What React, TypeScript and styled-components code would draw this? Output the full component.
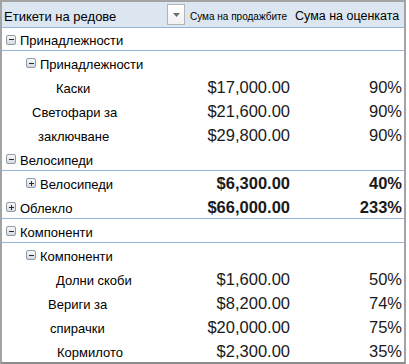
import React from "react";
import styled, { createGlobalStyle } from "styled-components";

type Row = {
  label: string;
  indent: number;
  toggle?: "minus" | "plus";
  sales?: string;
  pct?: string;
  bold?: boolean;
  line?: boolean;
  height?: number;
};

const rows: Row[] = [
  { label: "Принадлежности", indent: 6, toggle: "minus", line: true, height: 23 },
  { label: "Принадлежности", indent: 26, toggle: "minus" },
  { label: "Каски", indent: 56, sales: "$17,000.00", pct: "90%" },
  { label: "Светофари за", indent: 32, sales: "$21,600.00", pct: "90%" },
  { label: "заключване", indent: 38, sales: "$29,800.00", pct: "90%" },
  { label: "Велосипеди", indent: 6, toggle: "minus", line: true },
  { label: "Велосипеди", indent: 26, toggle: "plus", sales: "$6,300.00", pct: "40%", bold: true },
  { label: "Облекло", indent: 6, toggle: "plus", sales: "$66,000.00", pct: "233%", bold: true, line: true },
  { label: "Компоненти", indent: 6, toggle: "minus", line: true },
  { label: "Компоненти", indent: 26, toggle: "minus" },
  { label: "Долни скоби", indent: 56, sales: "$1,600.00", pct: "50%" },
  { label: "Вериги за", indent: 48, sales: "$8,200.00", pct: "74%" },
  { label: "спирачки", indent: 50, sales: "$20,000.00", pct: "75%" },
  { label: "Кормилото", indent: 57, sales: "$2,300.00", pct: "35%" },
];

const Toggle: React.FC<{ kind: "minus" | "plus" }> = ({ kind }) => (
  <ToggleBox>
    <svg width="7" height="7" viewBox="0 0 7 7">
      <rect x="1" y="3" width="5" height="1" fill="#2b2b2b" />
      {kind === "plus" && <rect x="3" y="1" width="1" height="5" fill="#2b2b2b" />}
    </svg>
  </ToggleBox>
);

const App: React.FC = () => {
  return (
    <>
      <GlobalStyle />
      <Pivot>
        <HeaderRow>
          <HeaderLabel>
            <span>Етикети на редове</span>
            <FilterButton>
              <svg width="7" height="4" viewBox="0 0 7 4">
                <path d="M0 0h7L3.5 4z" fill="#6d6d6d" />
              </svg>
            </FilterButton>
          </HeaderLabel>
          <SalesHead>Сума на продажбите</SalesHead>
          <PctHead>Сума на оценката</PctHead>
        </HeaderRow>
        {rows.map((r, i) => (
          <DataRow key={i} $line={r.line} $height={r.height ?? 24}>
            <Label $indent={r.indent}>
              {r.toggle && <Toggle kind={r.toggle} />}
              <span>{r.label}</span>
            </Label>
            <Value $bold={r.bold}>{r.sales}</Value>
            <Value $bold={r.bold}>{r.pct}</Value>
          </DataRow>
        ))}
      </Pivot>
    </>
  );
};

export default App;

const GlobalStyle = createGlobalStyle`
  body {
    margin: 0;
    background: #ffffff;
  }
`;

const Pivot = styled.div`
  box-sizing: border-box;
  width: 406px;
  height: 364px;
  border-top: 2px solid #a3a3a3;
  border-left: 2px solid #a3a3a3;
  border-right: 2px solid #a3a3a3;
  border-bottom: 2px solid #8c8c8c;
  background: #ffffff;
  overflow: hidden;
`;

const HeaderRow = styled.div`
  display: grid;
  grid-template-columns: 183px 107px 1fr;
  height: 26px;
  box-sizing: border-box;
  background: #dce6f1;
  border-bottom: 1px solid #95b3d7;
  font-family: "Liberation Sans", Arial, sans-serif;
  color: #000000;
`;

const HeaderLabel = styled.div`
  display: flex;
  align-items: center;
  justify-content: space-between;
  padding: 3px 0 0 2px;
  font-size: 13px;
`;

const FilterButton = styled.div`
  display: flex;
  align-items: center;
  justify-content: center;
  box-sizing: border-box;
  width: 18px;
  height: 21px;
  margin-top: -3px;
  border: 1px solid #b4b4b4;
  background: linear-gradient(#ffffff, #f1f1f1);
`;

const SalesHead = styled.div`
  display: flex;
  align-items: center;
  padding: 3px 0 0 5px;
  font-size: 10px;
  white-space: nowrap;
`;

const PctHead = styled.div`
  display: flex;
  align-items: center;
  padding: 3px 0 0 3px;
  font-size: 12.5px;
  white-space: nowrap;
`;

const DataRow = styled.div<{ $line?: boolean; $height: number }>`
  display: grid;
  grid-template-columns: 183px 107px 1fr;
  box-sizing: border-box;
  height: ${({ $height }) => $height}px;
  border-bottom: 1px solid ${({ $line }) => ($line ? "#95b3d7" : "transparent")};
`;

const Label = styled.div<{ $indent: number }>`
  display: flex;
  align-items: center;
  gap: 4px;
  padding: 3px 0 0 ${({ $indent }) => $indent - 2}px;
  font-family: "Liberation Sans", Arial, sans-serif;
  font-size: 13px;
  color: #000000;
  white-space: nowrap;
`;

const ToggleBox = styled.span`
  display: inline-flex;
  align-items: center;
  justify-content: center;
  box-sizing: border-box;
  width: 10px;
  height: 10px;
  margin-top: -2px;
  border: 1px solid #8f9aa6;
  border-radius: 2px;
  background: linear-gradient(#f7f8fa, #d5dae0);
`;

const Value = styled.div<{ $bold?: boolean }>`
  display: flex;
  align-items: center;
  justify-content: flex-end;
  padding: 2px 2px 0 0;
  font-family: "Liberation Sans", Arial, sans-serif;
  font-size: 16.5px;
  font-weight: ${({ $bold }) => ($bold ? 700 : 400)};
  color: #1a1a1a;
  white-space: nowrap;
`;
